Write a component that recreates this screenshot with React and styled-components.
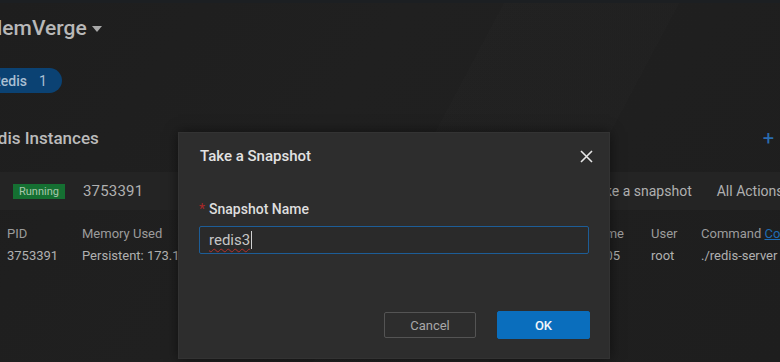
import styled, { createGlobalStyle } from "styled-components";

const Global = createGlobalStyle`
    html, body {
        margin: 0;
        padding: 0;
        background: #1e1e1e;
    }
    body {
        font-family: Roboto, "Liberation Sans", sans-serif;
        overflow: hidden;
    }
`

const Page = styled.div`
    position: relative;
    width: 780px;
    height: 362px;
    overflow: hidden;
    background:
        linear-gradient(118deg, transparent 0 52%, rgba(255,255,255,0.006) 52% 70%, transparent 70%),
        linear-gradient(125deg, #1e1e1e 0%, #202020 40%, #1e1e1e 100%);
    color: #b4b4b4;
`

const TopBar = styled.div`
    height: 3px;
    background: #1c1f22;
`

const Brand = styled.div`
    display: flex;
    align-items: center;
    gap: 5px;
    margin: 12px 0 0 -16px;
    height: 26px;
    font-size: 21px;
    font-weight: 500;
    color: #b8b8b8;

    svg {
        margin-top: 2px;
    }
`

const Pills = styled.div`
    display: flex;
    margin: 27px 0 0 -30px;
`

const Pill = styled.div`
    display: flex;
    align-items: center;
    gap: 12px;
    height: 25px;
    padding: 0 15px 0 22px;
    border-radius: 13px;
    background: #0b4273;
    color: #a9bfd2;
    font-size: 14px;
    font-weight: 500;

    span + span {
        font-weight: 400;
    }
`

const SectionHead = styled.div`
    display: flex;
    align-items: center;
    justify-content: space-between;
    margin: 33px 0 0 -22px;
    padding-right: 6px;
    height: 24px;

    h2 {
        margin: 0;
        font-size: 17px;
        font-weight: 500;
        color: #bbbbbb;
    }
`

const AddButton = styled.span`
    color: #2a6cb0;
    font-size: 20px;
    line-height: 1;
`

const InstanceRow = styled.div`
    display: flex;
    align-items: center;
    height: 38px;
    margin-top: 22px;
    padding-left: 13px;
    background: #242424;
    font-size: 15px;
`

const Badge = styled.span`
    display: inline-flex;
    align-items: center;
    height: 15px;
    padding: 0 6px;
    background: #157032;
    color: #a9c6ad;
    font-size: 11px;
    margin-right: 18px;
`

const Pid = styled.span`
    color: #b0b0b0;
    letter-spacing: 0.2px;
`

const Actions = styled.div`
    display: flex;
    gap: 25px;
    margin-left: auto;
    margin-right: -14px;
    color: #b0b0b0;
    font-size: 14px;
`

const Table = styled.div`
    display: grid;
    grid-template-columns: 75px 180px 150px 212px 27px 50px 1fr;
    padding-left: 7px;
    margin-top: 16px;
    row-gap: 7px;
    font-size: 13px;
    white-space: nowrap;
`

const HeadCell = styled.div`
    color: #9c9c9c;
    text-align: ${p => (p.right ? "right" : "left")};

    a {
        color: #1f6bb3;
        text-decoration: underline;
    }
`

const Cell = styled(HeadCell)`
    color: #b0b0b0;
    padding-right: ${p => (p.right ? "4px" : "0")};
`

const Dialog = styled.div`
    position: absolute;
    left: 178px;
    top: 132px;
    width: 432px;
    height: 227px;
    box-sizing: border-box;
    display: flex;
    flex-direction: column;
    background: #2d2d2d;
    border: 1px solid #333;
    box-shadow: 0 0 12px rgba(0, 0, 0, 0.5);
`

const DialogHeader = styled.div`
    display: flex;
    align-items: center;
    justify-content: space-between;
    padding: 13px 16px 0 21px;
    height: 20px;

    h3 {
        margin: 0;
        font-size: 15px;
        font-weight: 500;
        color: #e2e2e2;
    }
`

const CloseButton = styled.button`
    display: flex;
    background: none;
    border: 0;
    padding: 0;
    cursor: pointer;
`

const DialogBody = styled.div`
    padding: 35px 20px 0 20px;
`

const Label = styled.label`
    display: flex;
    align-items: center;
    gap: 4px;
    font-size: 14px;
    font-weight: 500;
    color: #dedede;

    b {
        color: #a82828;
        font-weight: 400;
    }
`

const Input = styled.div`
    display: flex;
    align-items: center;
    margin-top: 9px;
    height: 28px;
    box-sizing: border-box;
    padding-left: 9px;
    border: 1px solid #1d5d97;
    border-radius: 2px;
    background: #2a2a2a;
    font-size: 15px;
    color: #c6c6c6;

    span {
        text-decoration: underline wavy #b53030;
        text-decoration-thickness: 1px;
        text-underline-offset: 3px;
    }

    i {
        display: inline-block;
        width: 1px;
        height: 18px;
        background: #d0d0d0;
        margin-left: 1px;
    }
`

const DialogFooter = styled.div`
    display: flex;
    justify-content: flex-end;
    gap: 21px;
    margin-top: auto;
    padding: 0 19px 19px;
`

const Button = styled.button`
    width: ${p => (p.primary ? "93px" : "92px")};
    height: ${p => (p.primary ? "28px" : "26px")};
    margin-top: ${p => (p.primary ? "0" : "1px")};
    border-radius: 2px;
    font-family: inherit;
    font-size: 13px;
    border: 1px solid ${p => (p.primary ? "#0a6ebd" : "#545454")};
    background: ${p => (p.primary ? "#0a6ebd" : "transparent")};
    color: ${p => (p.primary ? "#f2f6fa" : "#a8a8a8")};
    font-weight: ${p => (p.primary ? 500 : 400)};
`

const columns = [
    ["PID", "3753391"],
    ["Memory Used", "Persistent: 173.18 MB"],
    ["Port", "6379"],
    ["Start Time", "2024-03-05", true],
    ["", ""],
    ["User", "root"],
    [null, "./redis-server *:6379"],
]

const App = () => {
    return (
        <Page>
            <Global />
            <TopBar />
            <Brand>
                MemVerge
                <svg width="10" height="6" viewBox="0 0 10 6">
                    <path d="M0 0h10L5 6z" fill="#a8a8a8" />
                </svg>
            </Brand>
            <Pills>
                <Pill>
                    <span>Redis</span>
                    <span>1</span>
                </Pill>
            </Pills>
            <SectionHead>
                <h2>Redis Instances</h2>
                <AddButton>+</AddButton>
            </SectionHead>
            <InstanceRow>
                <Badge>Running</Badge>
                <Pid>3753391</Pid>
                <Actions>
                    <span>Take a snapshot</span>
                    <span>All Actions ▾</span>
                </Actions>
            </InstanceRow>
            <Table>
                {columns.map(([head, , right], i) => (
                    <HeadCell key={"h" + i} right={right}>
                        {head === null ? <>Command <a>Copy</a></> : head}
                    </HeadCell>
                ))}
                {columns.map(([, value, right], i) => (
                    <Cell key={"v" + i} right={right}>{value}</Cell>
                ))}
            </Table>

            <Dialog>
                <DialogHeader>
                    <h3>Take a Snapshot</h3>
                    <CloseButton aria-label="Close">
                        <svg width="13" height="13" viewBox="0 0 13 13">
                            <path d="M1 1l11 11M12 1L1 12" stroke="#e6e6e6" strokeWidth="1.6" />
                        </svg>
                    </CloseButton>
                </DialogHeader>
                <DialogBody>
                    <Label><b>*</b>Snapshot Name</Label>
                    <Input>
                        <span>redis3</span>
                        <i />
                    </Input>
                </DialogBody>
                <DialogFooter>
                    <Button>Cancel</Button>
                    <Button primary>OK</Button>
                </DialogFooter>
            </Dialog>
        </Page>
    )
}

export default App
